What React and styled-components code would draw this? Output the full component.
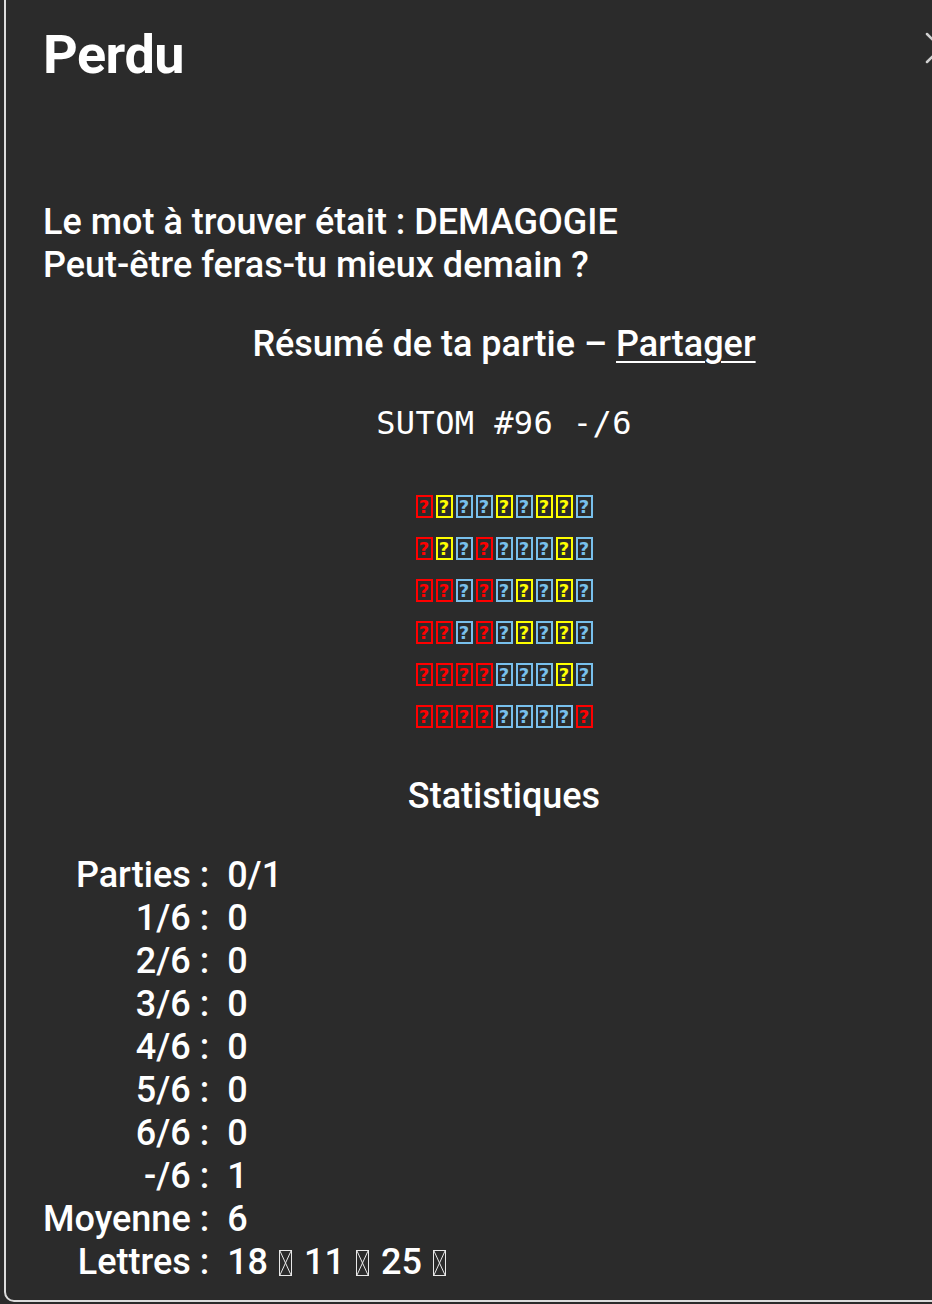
import React from 'react'
import styled, { createGlobalStyle } from 'styled-components'

const Global = createGlobalStyle`
  html, body {
    margin: 0;
    padding: 0;
    background: #2b2b2b;
    overflow: hidden;
  }
  body {
    font-family: Roboto, "Noto Sans", sans-serif;
    color: #ffffff;
  }
`;

const Page = styled.div`
  width: 932px;
  height: 1304px;
  overflow: hidden;
`;

const Panel = styled.div`
  box-sizing: border-box;
  width: 1000px;
  margin: -20px 0 0 4px;
  height: 1322px;
  border: 2px solid #dcdcdc;
  border-radius: 10px;
  padding: 41px 37px 0 37px;
  background: #2b2b2b;
`;

const Header = styled.div`
  display: flex;
  align-items: flex-start;
  justify-content: space-between;
`;

const Title = styled.h1`
  margin: 0;
  font-size: 54px;
  line-height: 64px;
  font-weight: 700;
  letter-spacing: -0.5px;
`;

const Close = styled.div`
  width: 32px;
  height: 32px;
  margin: 9px 8px 0 0;
  svg { display: block; }
`;

const Message = styled.p`
  margin: 114px 0 0 0;
  font-size: 36px;
  font-weight: 500;
  line-height: 43px;
`;

const Centered = styled.div`
  margin-top: ${(p) => p.top}px;
  text-align: center;
  font-size: 36px;
  font-weight: 500;
  line-height: 43px;
`;

const Link = styled.a`
  color: #ffffff;
  text-decoration: underline;
  text-underline-offset: 5px;
  text-decoration-thickness: 2px;
`;

const Mono = styled.div`
  margin-top: 36px;
  text-align: center;
  font-family: "DejaVu Sans Mono", "Liberation Mono", monospace;
  font-size: 32px;
  line-height: 43px;
  letter-spacing: 0.4px;
`;

const Grid = styled.div`
  margin-top: 50px;
  display: flex;
  flex-direction: column;
  align-items: center;
  gap: 19px;
`;

const Row = styled.div`
  display: flex;
  gap: 3px;
`;

const colors = { R: '#ff0000', Y: '#ffff00', B: '#78c0ec' };

const Cell = styled.span`
  box-sizing: border-box;
  width: 17px;
  height: 23px;
  border: 2px solid ${(p) => colors[p.c]};
  color: ${(p) => colors[p.c]};
  display: flex;
  align-items: center;
  justify-content: center;
  font-family: "DejaVu Sans", sans-serif;
  font-weight: 700;
  font-size: 18px;
  line-height: 1;
`;

const Stats = styled.div`
  margin-top: 36px;
  display: grid;
  grid-template-columns: auto 1fr;
  column-gap: 18px;
  font-size: 36px;
  font-weight: 500;
  line-height: 43px;
`;

const Label = styled.div`
  text-align: right;
  white-space: nowrap;
`;

const Value = styled.div`
  white-space: nowrap;
`;

const Tofu = styled.span`
  display: inline-block;
  box-sizing: border-box;
  width: 13px;
  height: 26px;
  margin: 0 12px 0 11px;
  vertical-align: -2px;
  border: 1px solid #e8e8e8;
  svg { display: block; }
`;

const rows = [
  'RYBBYBYYB',
  'RYBRBBBYB',
  'RRBRBYBYB',
  'RRBRBYBYB',
  'RRRRBBBYB',
  'RRRRBBBBR',
];

const stats = [
  ['Parties :', '0/1'],
  ['1/6 :', '0'],
  ['2/6 :', '0'],
  ['3/6 :', '0'],
  ['4/6 :', '0'],
  ['5/6 :', '0'],
  ['6/6 :', '0'],
  ['-/6 :', '1'],
  ['Moyenne :', '6'],
];

const Box = () => (
  <Tofu>
    <svg width="11" height="24" viewBox="0 0 11 24">
      <path d="M0 0 L11 24 M11 0 L0 24" stroke="#e8e8e8" strokeWidth="1" />
    </svg>
  </Tofu>
);

export default function App() {
  return (
    <Page>
      <Global />
      <Panel>
        <Header>
          <Title>Perdu</Title>
          <Close>
            <svg width="32" height="32" viewBox="0 0 32 32">
              <path d="M2 2 L30 30 M30 2 L2 30" stroke="#cfcfcf" strokeWidth="2.5" strokeLinecap="round" />
            </svg>
          </Close>
        </Header>
        <Message>
          Le mot à trouver était : DEMAGOGIE<br />
          Peut-être feras-tu mieux demain ?
        </Message>
        <Centered top={36}>
          Résumé de ta partie – <Link href="#">Partager</Link>
        </Centered>
        <Mono>SUTOM #96 -/6</Mono>
        <Grid>
          {rows.map((r, i) => (
            <Row key={i}>
              {r.split('').map((c, j) => (
                <Cell key={j} c={c}>?</Cell>
              ))}
            </Row>
          ))}
        </Grid>
        <Centered top={47}>Statistiques</Centered>
        <Stats>
          {stats.map(([l, v]) => (
            <React.Fragment key={l}>
              <Label>{l}</Label>
              <Value>{v}</Value>
            </React.Fragment>
          ))}
          <Label>Lettres :</Label>
          <Value>
            18<Box />11<Box />25<Box />
          </Value>
        </Stats>
      </Panel>
    </Page>
  )
}
